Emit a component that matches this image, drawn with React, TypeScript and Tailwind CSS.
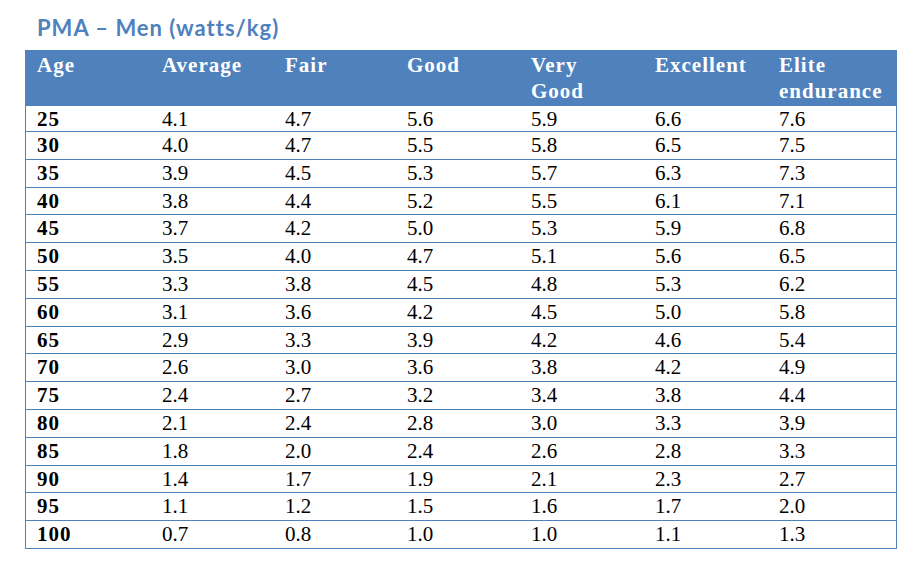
const HEADERS: string[][] = [
  ['Age'],
  ['Average'],
  ['Fair'],
  ['Good'],
  ['Very', 'Good'],
  ['Excellent'],
  ['Elite', 'endurance'],
];

const ROWS: string[][] = [
  ['25', '4.1', '4.7', '5.6', '5.9', '6.6', '7.6'],
  ['30', '4.0', '4.7', '5.5', '5.8', '6.5', '7.5'],
  ['35', '3.9', '4.5', '5.3', '5.7', '6.3', '7.3'],
  ['40', '3.8', '4.4', '5.2', '5.5', '6.1', '7.1'],
  ['45', '3.7', '4.2', '5.0', '5.3', '5.9', '6.8'],
  ['50', '3.5', '4.0', '4.7', '5.1', '5.6', '6.5'],
  ['55', '3.3', '3.8', '4.5', '4.8', '5.3', '6.2'],
  ['60', '3.1', '3.6', '4.2', '4.5', '5.0', '5.8'],
  ['65', '2.9', '3.3', '3.9', '4.2', '4.6', '5.4'],
  ['70', '2.6', '3.0', '3.6', '3.8', '4.2', '4.9'],
  ['75', '2.4', '2.7', '3.2', '3.4', '3.8', '4.4'],
  ['80', '2.1', '2.4', '2.8', '3.0', '3.3', '3.9'],
  ['85', '1.8', '2.0', '2.4', '2.6', '2.8', '3.3'],
  ['90', '1.4', '1.7', '1.9', '2.1', '2.3', '2.7'],
  ['95', '1.1', '1.2', '1.5', '1.6', '1.7', '2.0'],
  ['100', '0.7', '0.8', '1.0', '1.0', '1.1', '1.3'],
];

const cols = 'grid grid-cols-[125px_123px_122px_124px_124px_124px_1fr]';

export default function App() {
  return (
    <div className="w-[919px] h-[562px] bg-white pt-[17px] pl-[25px]">
      <h1 className="ml-[12px] h-[22px] leading-[22px] text-[22px] tracking-[1px] font-bold text-[#4f81bd] font-['Lato',sans-serif]">
        PMA – Men (watts/kg)
      </h1>

      <div className="mt-[11px] w-[872px] border-x border-b border-[#4f81bd] font-['Liberation_Serif',serif] text-[21px]">
        <div className={`${cols} h-[56px] bg-[#4f81bd] pl-[11px] pt-[3px] text-white font-bold tracking-[1px] leading-[25.6px]`}>
          {HEADERS.map((h, i) => (
            <div key={i}>
              {h.map((line) => (
                <div key={line}>{line}</div>
              ))}
            </div>
          ))}
        </div>

        {ROWS.map((row, r) => (
          <div
            key={row[0]}
            className={`${cols} pl-[11px] pt-[2px] leading-[23px] text-black ${
              r === 0 ? 'h-[25px]' : 'h-[27.8px] border-t border-[#4f81bd]'
            }`}
          >
            {row.map((cell, c) => (
              <div key={c} className={c === 0 ? 'font-bold tracking-[1px]' : ''}>
                {cell}
              </div>
            ))}
          </div>
        ))}
      </div>
    </div>
  );
}
